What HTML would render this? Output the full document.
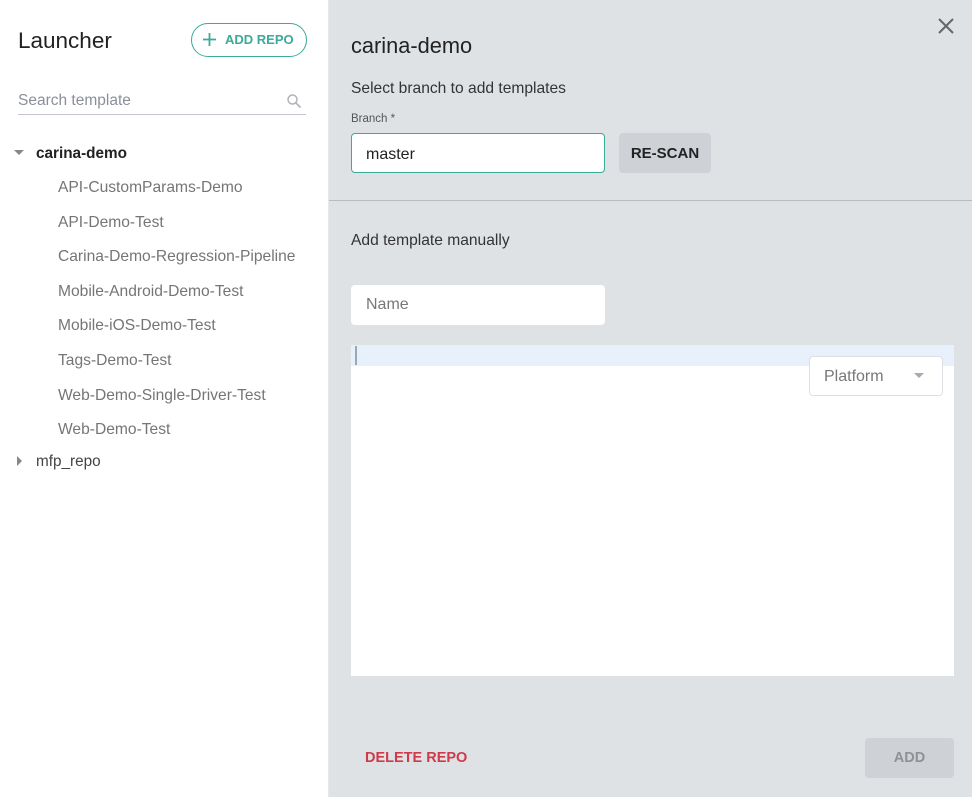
<!DOCTYPE html>
<html><head><style>
*{margin:0;padding:0;box-sizing:border-box}
body{width:972px;height:797px;overflow:hidden;font-family:"Liberation Sans",sans-serif;background:#dfe2e5;position:relative}
.a{position:absolute}
#left{left:0;top:0;width:329px;height:797px;background:#fff;border-right:1px solid #e6e8ea}
.item{position:absolute;left:58px;font-size:15.6px;color:#757575}
</style></head><body>
<div id="left" class="a">
<div class="a" style="left:18px;top:28px;font-size:22.5px;color:#222">Launcher</div>
<div class="a" style="left:191px;top:23px;width:116px;height:34px;border:1.5px solid #3aab98;border-radius:17px;color:#3aab98;font-size:13px;font-weight:bold;line-height:32px;padding-left:33px">ADD REPO</div>
<svg class="a" style="left:202px;top:32px" width="15" height="15"><path d="M7.5 1v13M1 7.5h13" stroke="#3aab98" stroke-width="1.8"/></svg>
<div class="a" style="left:18px;top:92px;font-size:15.5px;color:#8a8f99">Search template</div>
<svg class="a" style="left:286px;top:93px" width="16" height="16"><circle cx="6.5" cy="6.5" r="4.5" stroke="#b0b3b8" stroke-width="1.5" fill="none"/><path d="M10 10l4.5 4.5" stroke="#b0b3b8" stroke-width="1.6"/></svg>
<div class="a" style="left:18px;top:114px;width:288px;height:1px;background:#c6c8cf"></div>
<svg class="a" style="left:14px;top:150px" width="10" height="6"><path d="M0 0h10L5 5z" fill="#888"/></svg>
<div class="a" style="left:36px;top:145px;font-size:15.3px;font-weight:bold;color:#222">carina-demo</div>
<div class="item" style="top:179px">API-CustomParams-Demo</div>
<div class="item" style="top:214px">API-Demo-Test</div>
<div class="item" style="top:248px">Carina-Demo-Regression-Pipeline</div>
<div class="item" style="top:283px">Mobile-Android-Demo-Test</div>
<div class="item" style="top:317px">Mobile-iOS-Demo-Test</div>
<div class="item" style="top:352px">Tags-Demo-Test</div>
<div class="item" style="top:387px">Web-Demo-Single-Driver-Test</div>
<div class="item" style="top:421px">Web-Demo-Test</div>
<svg class="a" style="left:17px;top:456px" width="6" height="10"><path d="M0 0v10l5-5z" fill="#888"/></svg>
<div class="a" style="left:36px;top:453px;font-size:15.3px;color:#444">mfp_repo</div>
</div>
<svg class="a" style="left:937px;top:17px" width="18" height="18"><path d="M2 2l14 14M16 2L2 16" stroke="#666" stroke-width="2"/></svg>
<div class="a" style="left:351px;top:33px;font-size:21.8px;color:#222">carina-demo</div>
<div class="a" style="left:351px;top:80px;font-size:15.6px;color:#333">Select branch to add templates</div>
<div class="a" style="left:351px;top:113px;font-size:11.5px;color:#555">Branch *</div>
<div class="a" style="left:351px;top:133px;width:254px;height:40px;background:#fff;border:1.5px solid #3aab98;border-radius:4px;font-size:16px;color:#222;padding:12px 0 0 14px">master</div>
<div class="a" style="left:619px;top:133px;width:92px;height:40px;background:#ced2d6;border-radius:4px;font-size:15px;font-weight:bold;color:#222;text-align:center;line-height:42px">RE-SCAN</div>
<div class="a" style="left:329px;top:200px;width:643px;height:1px;background:#b8bcc0"></div>
<div class="a" style="left:351px;top:232px;font-size:15.6px;color:#333">Add template manually</div>
<div class="a" style="left:351px;top:285px;width:254px;height:40px;background:#fff;border-radius:4px;font-size:16px;color:#777;padding:11px 0 0 15px">Name</div>
<div class="a" style="left:351px;top:345px;width:603px;height:331px;background:#fff"></div>
<div class="a" style="left:351px;top:345px;width:603px;height:21px;background:#e8f0fc"></div>
<div class="a" style="left:355px;top:346px;width:2px;height:19px;background:#9aa"></div>
<div class="a" style="left:809px;top:356px;width:134px;height:40px;background:#fff;border:1px solid #dcdfe3;border-radius:4px;font-size:16px;color:#777;padding:11px 0 0 14px">Platform</div>
<svg class="a" style="left:914px;top:373px" width="10" height="6"><path d="M0 0h10L5 5z" fill="#aaa"/></svg>
<div class="a" style="left:365px;top:750px;font-size:14.5px;font-weight:bold;color:#cf3a4a">DELETE REPO</div>
<div class="a" style="left:865px;top:738px;width:89px;height:40px;background:#ced2d6;border-radius:4px;font-size:14.5px;font-weight:bold;color:#8e9296;text-align:center;line-height:41px">ADD</div>
</body></html>
